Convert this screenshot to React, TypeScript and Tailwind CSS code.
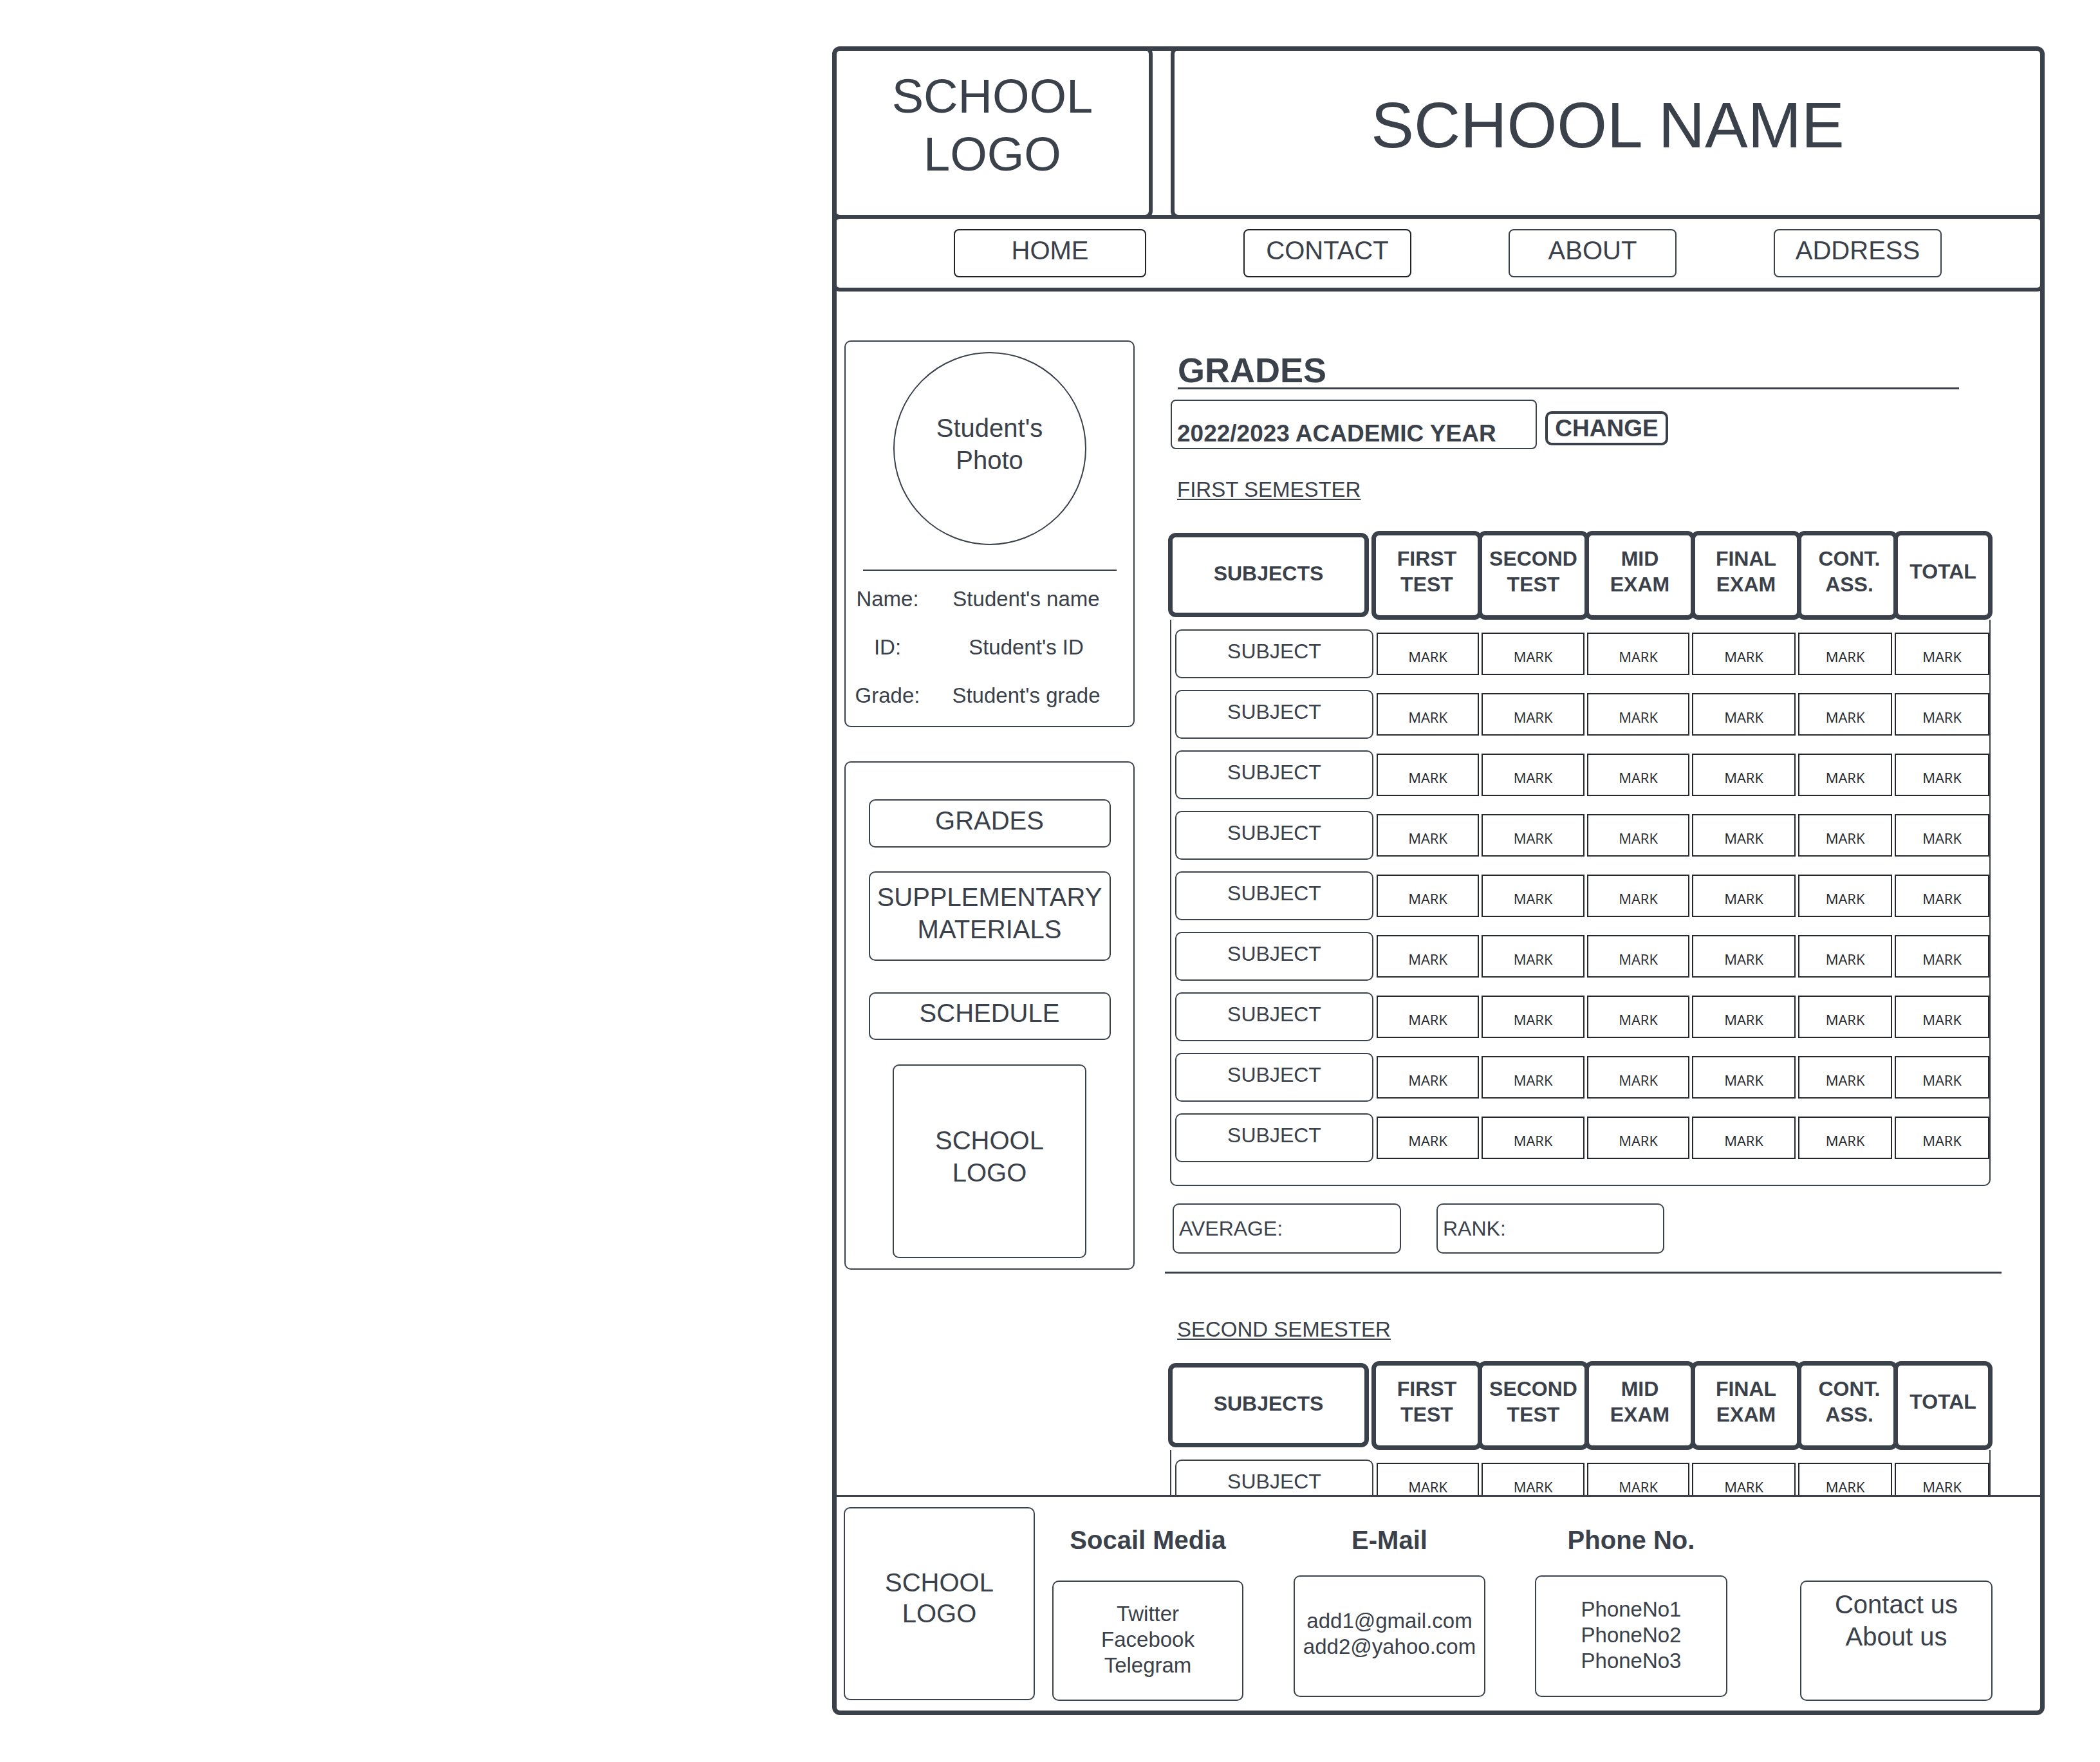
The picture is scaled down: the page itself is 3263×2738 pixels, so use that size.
import React from 'react';

const NAV = [
  { label: 'HOME', cls: 'w-[299px] border-2 border-[#1f2328]' },
  { label: 'CONTACT', cls: 'w-[261px] border-2 border-[#1f2328]' },
  { label: 'ABOUT', cls: 'w-[261px] border-2 border-[#3a414a]' },
  { label: 'ADDRESS', cls: 'w-[261px] border-2 border-[#3a414a]' },
];

const HEAD = [
  { lines: ['FIRST', 'TEST'], cls: 'w-[172px] ml-[4px]' },
  { lines: ['SECOND', 'TEST'], cls: 'w-[173px] -ml-[7px]' },
  { lines: ['MID', 'EXAM'], cls: 'w-[172px] -ml-[7px]' },
  { lines: ['FINAL', 'EXAM'], cls: 'w-[172px] -ml-[7px]' },
  { lines: ['CONT.', 'ASS.'], cls: 'w-[157px] -ml-[7px] pl-[6px]' },
  { lines: ['TOTAL'], cls: 'w-[154px] -ml-[7px]' },
];

const MARK_W = ['w-[159px]', 'w-[160px]', 'w-[159px]', 'w-[161px]', 'w-[146px]', 'w-[147px]'];

function GradeTable({ rows }: { rows: number }) {
  return (
    <div className="w-[1281px]">
      <div className="flex items-start h-[138px]">
        <div className="mt-[3px] w-[312px] h-[131px] border-[7px] border-[#3a414a] rounded-[12px] flex items-center justify-center pb-[6px] text-[32px] leading-[40px] font-bold">
          SUBJECTS
        </div>
        {HEAD.map((h) => (
          <div
            key={h.lines.join('-')}
            className={`${h.cls} h-[138px] border-[7px] border-[#3a414a] rounded-[12px] flex flex-col items-center justify-center pb-[12px] text-[32px] leading-[40px] font-bold`}
          >
            {h.lines.map((l) => (
              <span key={l}>{l}</span>
            ))}
          </div>
        ))}
      </div>
      <div className="mx-[3px] border-x-2 border-b-2 border-[#3a414a] rounded-b-[10px] pt-[15px] pb-[35px] pl-[6px] flex flex-col gap-[18px]">
        {Array.from({ length: rows }, (_, r) => (
          <div key={r} className="flex items-center h-[76px]">
            <div className="w-[308px] h-[76px] border-2 border-[#3a414a] rounded-[10px] flex items-center justify-center pb-[8px] text-[32px] leading-none">
              SUBJECT
            </div>
            <div className="flex gap-[4px] ml-[5px]">
              {MARK_W.map((w, i) => (
                <div
                  key={i}
                  className={`${w} h-[66px] border-2 border-[#25282c] flex items-center justify-center pt-[8px] font-['Open_Sans',sans-serif] text-[22px] leading-none text-[#25282c]`}
                >
                  MARK
                </div>
              ))}
            </div>
          </div>
        ))}
      </div>
    </div>
  );
}

export default function App() {
  return (
    <div className="w-[3263px] h-[2738px] bg-white pl-[1293px] pt-[72px] font-['Liberation_Sans',Arial,sans-serif] text-[#3a414a]">
      <div className="w-[1884px] h-[2593px] border-[7px] border-[#3a414a] rounded-[12px] flex flex-col overflow-hidden">
        {/* header */}
        <div className="flex -mx-[7px] -mt-[7px] h-[268px] gap-[28px]">
          <div className="w-[498px] h-[268px] border-[6px] border-[#3a414a] rounded-[12px] pt-[27px] text-center text-[74px] leading-[90px]">
            SCHOOL
            <br />
            LOGO
          </div>
          <div className="flex-1 h-[268px] border-[6px] border-[#3a414a] rounded-[12px] pt-[66px] text-center text-[100px] leading-none">
            SCHOOL NAME
          </div>
        </div>

        {/* nav */}
        <div className="-mx-[7px] -mt-[6px] h-[119px] border-[6px] border-[#3a414a] rounded-[12px] flex items-center pl-[183px] gap-[151px]">
          {NAV.map((n) => (
            <div
              key={n.label}
              className={`${n.cls} h-[75px] rounded-[8px] flex items-center justify-center pb-[10px] text-[40px] leading-none`}
            >
              {n.label}
            </div>
          ))}
        </div>

        {/* main */}
        <div className="h-[1870px] overflow-hidden flex items-start">
          {/* sidebar */}
          <div className="ml-[12px] mt-[76px] w-[451px] flex flex-col">
            <div className="h-[601px] border-2 border-[#3a414a] rounded-[10px] flex flex-col items-center">
              <div className="mt-[16px] w-[300px] h-[300px] rounded-full border-2 border-[#3a414a] flex items-center justify-center pb-[14px] text-center text-[40px] leading-[50px]">
                Student's
                <br />
                Photo
              </div>
              <div className="mt-[38px] w-[394px] h-[2px] bg-[#3a414a]" />
              <div className="mt-[27px] w-full flex flex-col gap-[42px] text-[33px] leading-none">
                {[
                  ['Name:', "Student's name"],
                  ['ID:', "Student's ID"],
                  ['Grade:', "Student's grade"],
                ].map(([k, v]) => (
                  <div key={k} className="flex">
                    <span className="w-[130px] text-center">{k}</span>
                    <span className="w-[301px] text-center">{v}</span>
                  </div>
                ))}
              </div>
            </div>

            <div className="mt-[53px] h-[790px] border-2 border-[#3a414a] rounded-[10px] flex flex-col items-center pt-[57px] text-[40px] leading-[50px]">
              <div className="w-[376px] h-[75px] border-2 border-[#3a414a] rounded-[10px] flex items-center justify-center pb-[10px]">
                GRADES
              </div>
              <div className="mt-[37px] w-[376px] h-[139px] border-2 border-[#3a414a] rounded-[10px] flex items-center justify-center pb-[10px] text-center">
                SUPPLEMENTARY
                <br />
                MATERIALS
              </div>
              <div className="mt-[49px] w-[376px] h-[74px] border-2 border-[#3a414a] rounded-[10px] flex items-center justify-center pb-[10px]">
                SCHEDULE
              </div>
              <div className="mt-[38px] w-[301px] h-[301px] border-2 border-[#3a414a] rounded-[10px] flex items-center justify-center pb-[16px] text-center">
                SCHOOL
                <br />
                LOGO
              </div>
            </div>
          </div>

          {/* grades */}
          <div className="ml-[47px] w-[1300px] flex flex-col items-start">
            <div className="mt-[95px] ml-[20px] w-[1214px] border-b-[3px] border-[#3a414a] text-[54px] leading-none font-bold">
              GRADES
            </div>
            <div className="mt-[16px] ml-[9px] flex items-start">
              <div className="w-[569px] h-[77px] border-2 border-[#3a414a] rounded-[8px] flex items-end pl-[8px] pb-[4px] text-[37px] leading-none font-bold">
                2022/2023 ACADEMIC YEAR
              </div>
              <div className="ml-[13px] mt-[18px] w-[191px] h-[53px] border-[4px] border-[#3a414a] rounded-[10px] flex items-center justify-center text-[37px] leading-none font-bold">
                CHANGE
              </div>
            </div>
            <div className="mt-[46px] ml-[19px] text-[33px] leading-none underline underline-offset-[3px] decoration-2">
              FIRST SEMESTER
            </div>
            <div className="mt-[48px] ml-[5px]">
              <GradeTable rows={9} />
            </div>
            <div className="mt-[27px] ml-[12px] flex gap-[55px] text-[32px] leading-none">
              <div className="w-[355px] h-[78px] border-2 border-[#3a414a] rounded-[10px] flex items-center pl-[8px]">
                AVERAGE:
              </div>
              <div className="w-[354px] h-[78px] border-2 border-[#3a414a] rounded-[10px] flex items-center pl-[8px]">
                RANK:
              </div>
            </div>
            <div className="mt-[28px] w-[1300px] h-[3px] bg-[#3a414a]" />
            <div className="mt-[70px] ml-[19px] text-[33px] leading-none underline underline-offset-[3px] decoration-2">
              SECOND SEMESTER
            </div>
            <div className="mt-[33px] ml-[5px]">
              <GradeTable rows={1} />
            </div>
          </div>
        </div>

        {/* footer */}
        <div className="flex-1 border-t-[3px] border-[#3a414a] pl-[11px] pt-[16px] flex items-start">
          <div className="w-[297px] h-[300px] border-2 border-[#3a414a] rounded-[10px] flex items-center justify-center pb-[18px] text-center text-[40px] leading-[48px]">
            SCHOOL
            <br />
            LOGO
          </div>
          <div className="ml-[27px] w-[297px] flex flex-col">
            <div className="mt-[31px] text-center text-[40px] leading-none font-bold">Socail Media</div>
            <div className="mt-[43px] h-[187px] border-2 border-[#3a414a] rounded-[10px] flex flex-col items-center justify-center pb-[4px] text-[33px] leading-[40px]">
              <span>Twitter</span>
              <span>Facebook</span>
              <span>Telegram</span>
            </div>
          </div>
          <div className="ml-[78px] w-[298px] flex flex-col">
            <div className="mt-[31px] text-center text-[40px] leading-none font-bold">E-Mail</div>
            <div className="mt-[35px] h-[189px] border-2 border-[#3a414a] rounded-[10px] flex flex-col items-center justify-center pb-[8px] text-[33px] leading-[40px]">
              <span>add1@gmail.com</span>
              <span>add2@yahoo.com</span>
            </div>
          </div>
          <div className="ml-[77px] w-[299px] flex flex-col">
            <div className="mt-[31px] text-center text-[40px] leading-none font-bold">Phone No.</div>
            <div className="mt-[35px] h-[189px] border-2 border-[#3a414a] rounded-[10px] flex flex-col items-center justify-center pb-[4px] text-[33px] leading-[40px]">
              <span>PhoneNo1</span>
              <span>PhoneNo2</span>
              <span>PhoneNo3</span>
            </div>
          </div>
          <div className="ml-[113px] mt-[114px] w-[299px] h-[187px] border-2 border-[#3a414a] rounded-[10px] pt-[10px] text-center text-[40px] leading-[50px]">
            Contact us
            <br />
            About us
          </div>
        </div>
      </div>
    </div>
  );
}
